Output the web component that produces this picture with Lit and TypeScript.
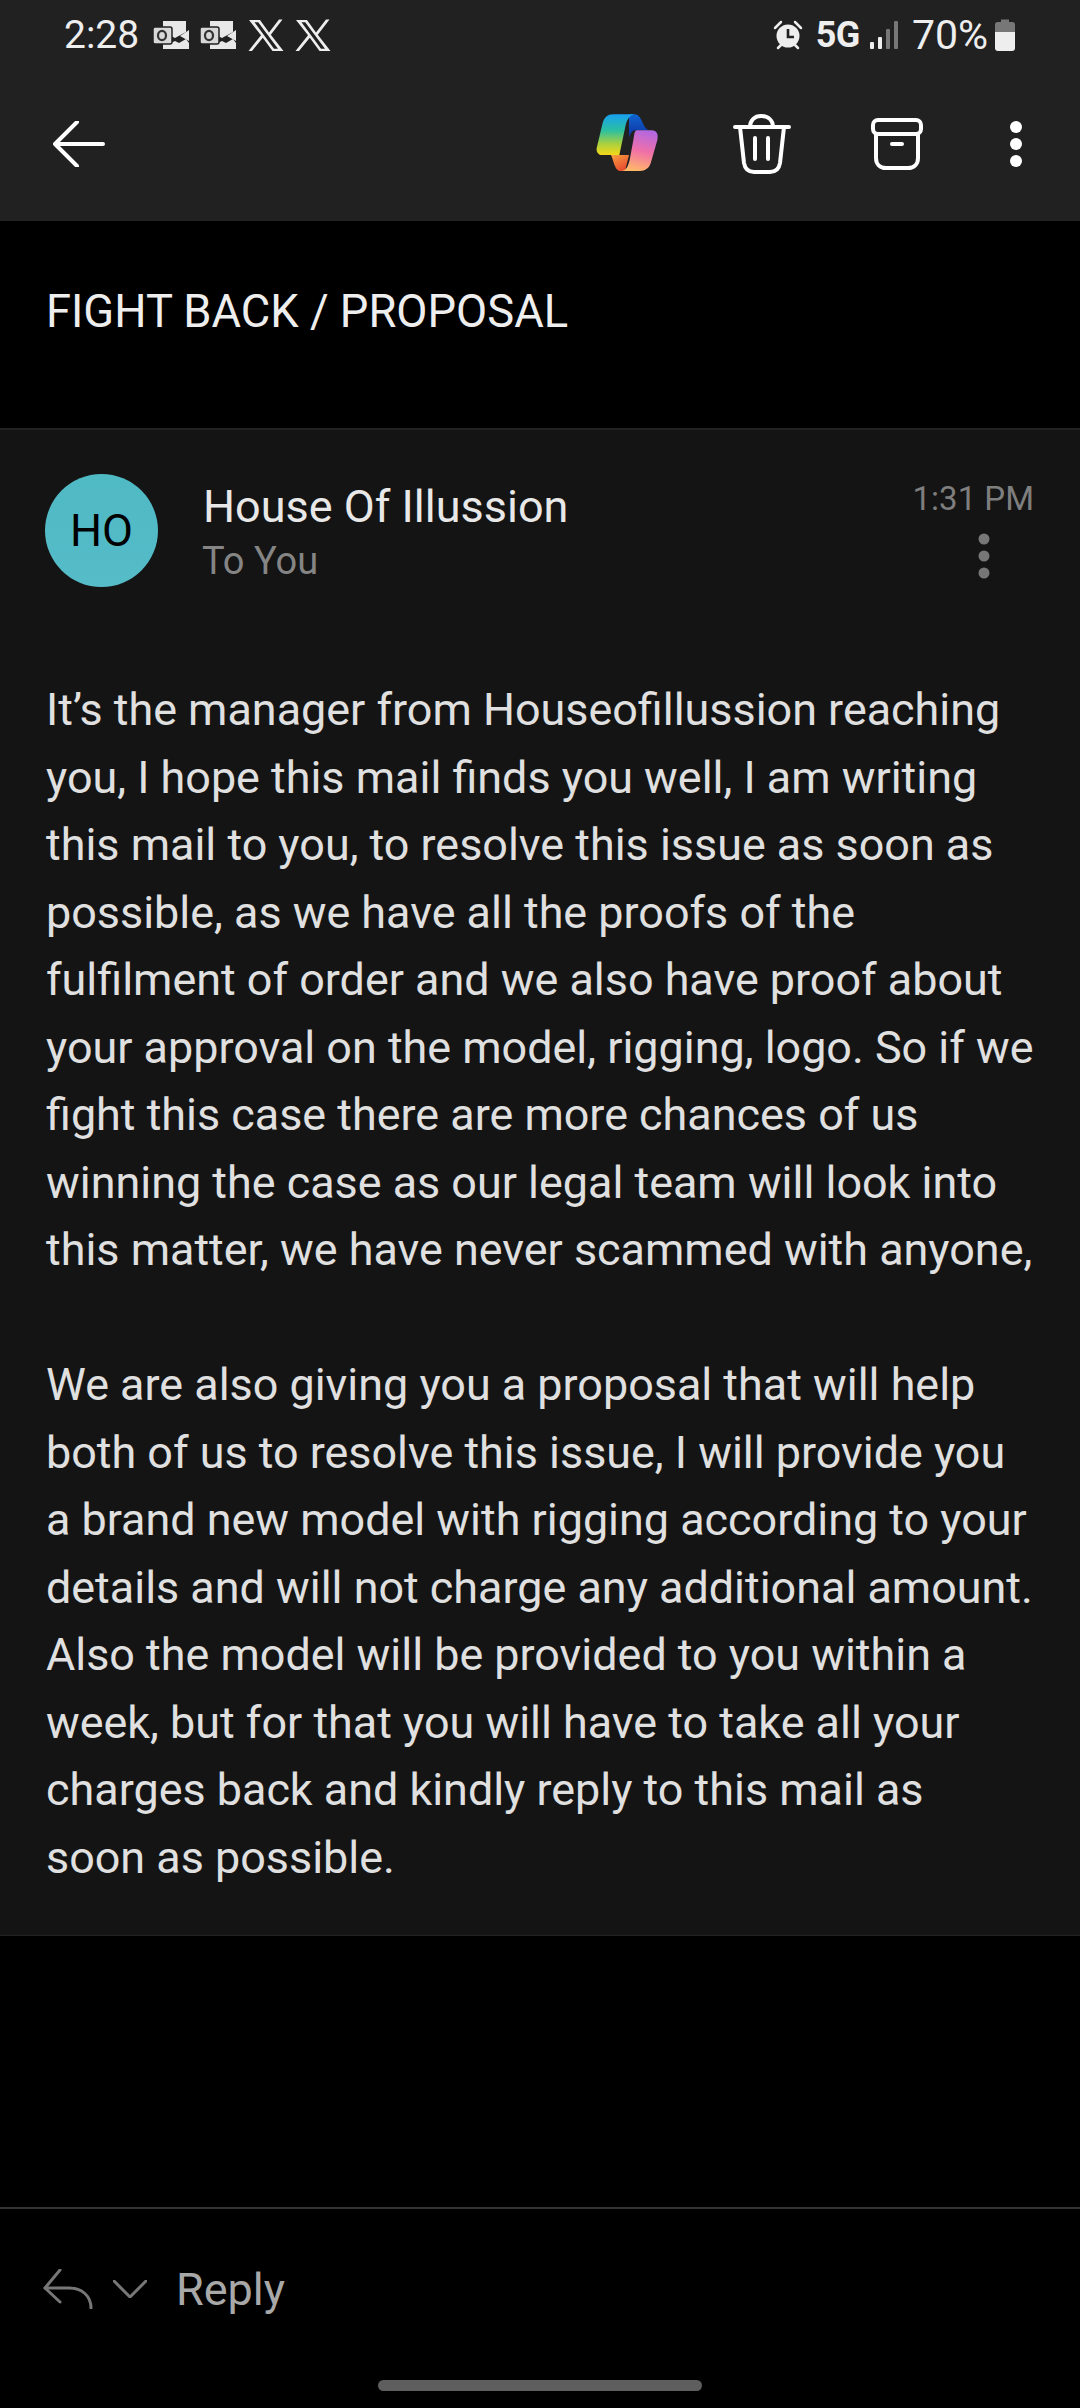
import { LitElement, html, css } from "lit";
import { customElement } from "lit/decorators.js";

const para1 = [
  "It’s the manager from Houseofillussion reaching",
  "you, I hope this mail finds you well, I am writing",
  "this mail to you, to resolve this issue as soon as",
  "possible, as we have all the proofs of the",
  "fulfilment of order and we also have proof about",
  "your approval on the model, rigging, logo. So if we",
  "fight this case there are more chances of us",
  "winning the case as our legal team will look into",
  "this matter, we have never scammed with anyone,",
];
const para2 = [
  "We are also giving you a proposal that will help",
  "both of us to resolve this issue, I will provide you",
  "a brand new model with rigging according to your",
  "details and will not charge any additional amount.",
  "Also the model will be provided to you within a",
  "week, but for that you will have to take all your",
  "charges back and kindly reply to this mail as",
  "soon as possible.",
];

const outlook = html`<svg class="ol" viewBox="0 0 37 30" width="37" height="30">
  <path fill="#e8e8e8" d="M10 1H33V12L22 18L10 12Z" />
  <path fill="#e8e8e8" d="M36 10V21L27 16Z" />
  <path fill="#e8e8e8" d="M10 20L13 22H20L22 21L26 23L33 19L36 23V29H10Z" />
  <rect x="0" y="7" width="19" height="17" rx="2" fill="#d8d8d8" stroke="#212121" stroke-width="1.5" />
  <ellipse cx="9" cy="15.5" rx="4" ry="4.6" fill="none" stroke="#333" stroke-width="2.2" />
</svg>`;

const xLogo = html`<svg viewBox="0 0 36 32" width="36" height="32">
  <path fill="#eeeeee" fill-rule="evenodd" d="M1 1H12L21 13.5L31 0.5H34.5L22.8 15.8L35.5 32H24.5L14.8 18.8L4 32H0.5L13 16.3ZM6.5 3.2L26 29.8H30L10.2 3.2Z" />
</svg>`;

@customElement("app-root")
export class AppRoot extends LitElement {
  static styles = css`
    :host {
      display: block;
      width: 1080px;
      height: 2408px;
      background: #000;
      font-family: Roboto, sans-serif;
      overflow: hidden;
    }
    .top { background: #212121; height: 221px; }
    .status {
      height: 70px;
      display: flex;
      align-items: center;
      padding: 0 64px 0 64px;
      color: #eeeeee;
    }
    .time { font-size: 39px; line-height: 70px; width: 89px; }
    .ol { margin-right: 10px; }
    .gap1 { width: 1px; }
    .gap11 { width: 11px; }
    .status svg { flex: none; }
    .sright { margin-left: auto; display: flex; align-items: center; }
    .g5 { font-size: 36px; font-weight: 700; margin: 0 10px 0 13px; letter-spacing: -0.5px; }
    .pct { font-size: 41px; margin: 0 6px 0 14px; }
    .tools {
      height: 151px;
      display: flex;
      align-items: center;
      padding: 0 58px 3px 53px;
      box-sizing: border-box;
    }
    .tools svg { flex: none; display: block; }
    .tright { margin-left: auto; display: flex; align-items: center; }
    .cop { margin-bottom: 3px; }
    .trash { margin-left: 63px; }
    .arch { margin-left: 80px; }
    .dots { margin-left: 87px; }
    .subject {
      height: 209px;
      display: flex;
      align-items: center;
      padding-left: 46px;
      box-sizing: border-box;
      color: #eeeeee;
      font-size: 45.3px;
      padding-bottom: 26px;
      border-bottom: 2px solid #222222;
    }
    .card {
      background: #141414;
      height: 1506px;
      box-sizing: border-box;
      padding: 44px 46px 0 45px;
      border-bottom: 1px solid #222;
    }
    .head { display: flex; height: 113px; }
    .avatar {
      width: 113px;
      height: 113px;
      border-radius: 50%;
      background: linear-gradient(#4fb9c4, #55bcc8);
      color: #000;
      font-size: 45px;
      display: flex;
      align-items: center;
      justify-content: center;
      flex: none;
    }
    .who { margin-left: 45px; flex: 1; }
    .name { color: #e8e8e8; font-size: 45px; line-height: 58px; margin-top: 4px; }
    .to { color: #858585; font-size: 38px; line-height: 50px; margin: 0 0 0 -1px; }
    .meta { display: flex; flex-direction: column; align-items: flex-end; }
    .stamp { color: #7e7e7e; font-size: 33px; line-height: 40px; margin-top: 5px; }
    .more { margin: 14px 44px 0 0; display: block; }
    .body {
      margin: 89px 0 0 1px;
      color: #e0e0e0;
      font-size: 44.9px;
      line-height: 67.5px;
    }
    .line { display: block; white-space: nowrap; height: 67.5px; }
    .gap { height: 67.5px; }
    .spacer { height: 271px; }
    .foot {
      border-top: 2px solid #333333;
      height: 197px;
      box-sizing: border-box;
      position: relative;
    }
    .reply {
      display: flex;
      align-items: center;
      height: 160px;
      padding-left: 43px;
      color: #a8a8a8;
      font-size: 45px;
    }
    .reply svg { flex: none; }
    .reply .chev { margin-left: 20px; }
    .reply span { margin-left: 29px; }
    .homebar {
      position: absolute;
      left: 378px;
      top: 171px;
      width: 324px;
      height: 11px;
      border-radius: 6px;
      background: #5e5e5e;
    }
  `;

  render() {
    return html`
      <div class="top">
        <div class="status">
          <span class="time">2:28</span>
          ${outlook}${outlook}
          <span class="gap1"></span>
          ${xLogo}<span class="gap11"></span>${xLogo}
          <div class="sright">
            <svg viewBox="0 0 30 30" width="30" height="30">
              <path d="M2 8L8 2M28 8L22 2" stroke="#eee" stroke-width="2.5" stroke-linecap="round" />
              <path d="M5 28L8 25M25 28L22 25" stroke="#eee" stroke-width="2.5" stroke-linecap="round" />
              <circle cx="15" cy="16" r="11.5" fill="#eee" />
              <path d="M15 9V17H21" fill="none" stroke="#212121" stroke-width="2.6" />
            </svg>
            <span class="g5">5G</span>
            <svg viewBox="0 0 28 30" width="28" height="30">
              <rect x="0" y="22" width="4" height="7" rx="1" fill="#eee" />
              <rect x="8" y="17" width="4" height="12" rx="1" fill="#eee" />
              <rect x="16" y="9" width="4" height="20" rx="1" fill="#777" />
              <rect x="24" y="1" width="4" height="28" rx="1" fill="#777" />
            </svg>
            <span class="pct">70%</span>
            <svg viewBox="0 0 22 32" width="22" height="32">
              <path d="M7 0.5H15V3H18.5Q21 3 21 6V13H1V6Q1 3 3.5 3H7Z" fill="#777" />
              <path d="M1 13H21V29Q21 32 18 32H4Q1 32 1 29Z" fill="#eee" />
            </svg>
          </div>
        </div>
        <div class="tools">
          <svg viewBox="0 0 52 46" width="52" height="46" fill="none" stroke="#fff" stroke-width="4" stroke-linecap="round" stroke-linejoin="round">
            <path d="M50 23H2M24 1L2 23L24 45" />
          </svg>
          <div class="tright">
            <svg class="cop" viewBox="0 0 255 225" width="85" height="75">
              <defs>
                <linearGradient id="cl" x1="0.5" y1="0" x2="0.5" y2="1">
                  <stop offset="0" stop-color="#18a0f0" />
                  <stop offset="0.4" stop-color="#2cc0a0" />
                  <stop offset="0.72" stop-color="#a8d040" />
                  <stop offset="1" stop-color="#f5d818" />
                </linearGradient>
                <linearGradient id="cr" x1="0.6" y1="0" x2="0.4" y2="1">
                  <stop offset="0" stop-color="#b468e0" />
                  <stop offset="0.5" stop-color="#f070a8" />
                  <stop offset="1" stop-color="#ffb868" />
                </linearGradient>
                <linearGradient id="cb" x1="0" y1="0" x2="0" y2="1">
                  <stop offset="0" stop-color="#0f64d0" />
                  <stop offset="1" stop-color="#1030a0" />
                </linearGradient>
                <linearGradient id="co" x1="0" y1="0" x2="0.6" y2="1">
                  <stop offset="0" stop-color="#f8a040" />
                  <stop offset="1" stop-color="#e84a30" />
                </linearGradient>
              </defs>
              <path fill="url(#cb)" d="M132 28H150C172 30 172 70 192 76H150C140 76 135 90 132 100Z" />
              <path fill="url(#co)" d="M78 150H132L120 198H105C90 198 85 165 78 150Z" />
              <path fill="url(#cl)" d="M85 28H150C130 30 124 50 120 70L103 150H52C38 150 32 138 36 125L52 58C57 38 66 28 85 28Z" />
              <path fill="url(#cr)" d="M155 76H200C215 76 221 88 217 105L198 172C193 190 180 198 165 198H108C125 198 130 180 134 165L146 100C148 85 150 76 155 76Z" />
            </svg>
            <svg class="trash" viewBox="0 0 58 60" width="58" height="60" fill="none" stroke="#fff" stroke-width="4" stroke-linecap="round" stroke-linejoin="round">
              <path d="M2 13H56M17 13C17 6 22 2 28 2C35 2 40 6 40 13" />
              <path d="M7 13L11 49C12 55 15 58 21 58H37C43 58 46 55 47 49L51 13" />
              <path d="M22 24V45M35 24V45" />
            </svg>
            <svg class="arch" viewBox="0 0 52 52" width="52" height="52" fill="none" stroke="#fff" stroke-width="4" stroke-linecap="round" stroke-linejoin="round">
              <rect x="2" y="2" width="48" height="14" rx="5" />
              <path d="M5 16V40C5 46 9 50 15 50H37C43 50 47 46 47 40V16" />
              <path d="M21 26H31" />
            </svg>
            <svg class="dots" viewBox="0 0 12 46" width="12" height="46" fill="#fff">
              <circle cx="6" cy="6" r="6" /><circle cx="6" cy="23" r="6" /><circle cx="6" cy="40" r="6" />
            </svg>
          </div>
        </div>
      </div>
      <div class="subject">FIGHT BACK / PROPOSAL</div>
      <div class="card">
        <div class="head">
          <div class="avatar">HO</div>
          <div class="who">
            <div class="name">House Of Illussion</div>
            <div class="to">To You</div>
          </div>
          <div class="meta">
            <div class="stamp">1:31 PM</div>
            <svg class="more" viewBox="0 0 12 46" width="12" height="46" fill="#777">
              <circle cx="6" cy="6" r="5.5" /><circle cx="6" cy="23" r="5.5" /><circle cx="6" cy="40" r="5.5" />
            </svg>
          </div>
        </div>
        <div class="body">
          ${para1.map((l) => html`<span class="line">${l}</span>`)}
          <div class="gap"></div>
          ${para2.map((l) => html`<span class="line">${l}</span>`)}
        </div>
      </div>
      <div class="spacer"></div>
      <div class="foot">
        <div class="reply">
          <svg viewBox="0 0 50 40" width="50" height="40" fill="none" stroke="#777" stroke-width="3" stroke-linecap="round" stroke-linejoin="round">
            <path d="M17 1L2 19L17 33" />
            <path d="M2 19H26C39 19 48 27 48 39" />
          </svg>
          <svg class="chev" viewBox="0 0 34 18" width="34" height="18" fill="none" stroke="#777" stroke-width="3" stroke-linecap="round" stroke-linejoin="round">
            <path d="M1 1L17 17L33 1" />
          </svg>
          <span>Reply</span>
        </div>
        <div class="homebar"></div>
      </div>
    `;
  }
}
